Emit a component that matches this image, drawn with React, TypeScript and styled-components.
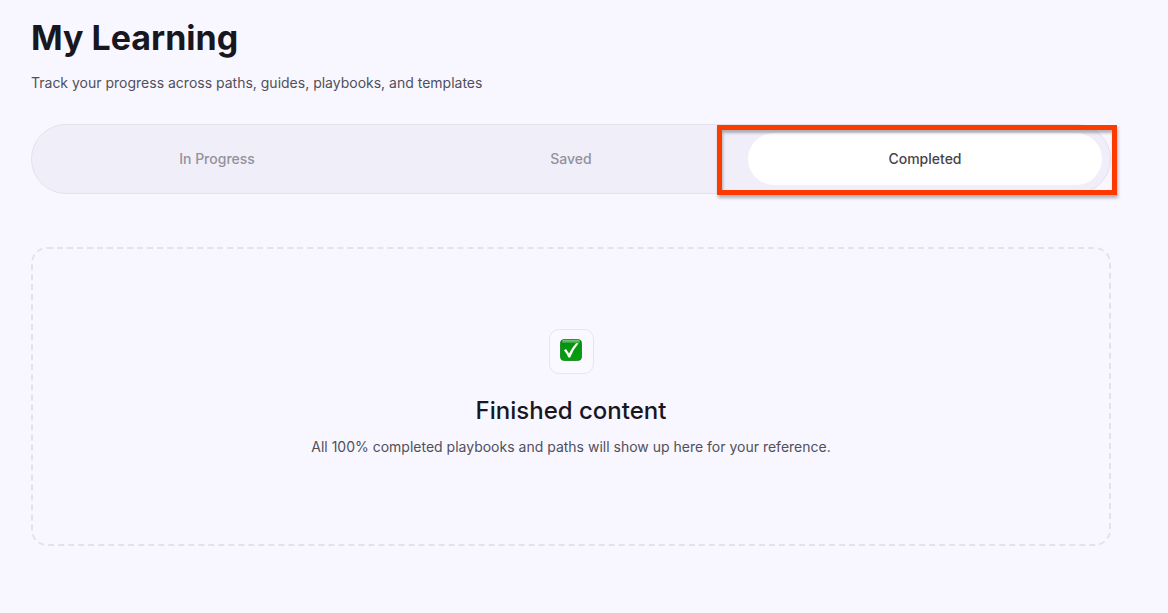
import React, { useState } from "react";
import styled, { createGlobalStyle } from "styled-components";

const GlobalStyle = createGlobalStyle`
  *, *::before, *::after { box-sizing: border-box; }
  body {
    margin: 0;
    background: #f8f7ff;
    color: #18161f;
    font-family: Inter, "Liberation Sans", sans-serif;
    font-size: 14px;
    line-height: 20px;
  }
  h1, h2, p { margin: 0; }
`;

const Page = styled.main`
  padding: 16px 57px 64px 31px;
`;

const Title = styled.h1`
  font-size: 34px;
  line-height: 44px;
  font-weight: 700;
`;

const Lead = styled.p`
  color: #514f5a;
`;

const Intro = styled(Lead)`
  margin-top: 13px;
`;

const TabBar = styled.div`
  display: flex;
  margin-top: 31px;
  padding: 8px;
  border: 1px solid #e3e1eb;
  border-radius: 35px;
  background: #f0eef8;
`;

const TabSlot = styled.div`
  position: relative;
  flex: 1;
  display: flex;
`;

const Tab = styled.button<{ $active: boolean }>`
  flex: 1;
  height: 52px;
  padding: 0;
  border: 0;
  border-radius: 26px;
  background: ${(p) => (p.$active ? "#ffffff" : "transparent")};
  color: ${(p) => (p.$active ? "#45434c" : "#93919c")};
  font: inherit;
  font-weight: 500;
  cursor: pointer;
`;

const Highlight = styled.span`
  position: absolute;
  inset: -8px -15px -10px -31px;
  border: 5px solid #ff3a00;
  box-shadow: 1px 3px 3px rgba(0, 0, 0, 0.28), inset 1px 3px 3px rgba(0, 0, 0, 0.28);
  pointer-events: none;
`;

const EmptyState = styled.section`
  display: flex;
  flex-direction: column;
  align-items: center;
  margin-top: 53px;
  padding: 80px 24px;
  border: 2px dashed #e3e1ee;
  border-radius: 16px;
  text-align: center;
`;

const IconTile = styled.div`
  display: grid;
  place-items: center;
  width: 45px;
  height: 45px;
  padding-bottom: 3px;
  border: 1px solid #e6e4ef;
  border-radius: 10px;
  background: #faf9ff;
`;

const EmptyTitle = styled.h2`
  margin: 21px 0 10px;
  font-size: 24px;
  line-height: 32px;
  font-weight: 500;
`;

const EmptyText = styled(Lead)`
  margin-bottom: 7px;
`;

const CheckIcon = () => (
  <svg width="22" height="22" viewBox="0 0 22 22" aria-hidden="true">
    <defs>
      <linearGradient id="face" x1="0" y1="0" x2="0" y2="1">
        <stop offset="0" stopColor="#078f12" />
        <stop offset="1" stopColor="#04a00b" />
      </linearGradient>
      <linearGradient id="shine" x1="0" y1="0" x2="0" y2="1">
        <stop offset="0" stopColor="#7ccb80" />
        <stop offset="1" stopColor="#2fa238" />
      </linearGradient>
    </defs>
    <rect x="0.4" y="0.4" width="21.2" height="21.2" rx="4" fill="url(#face)" stroke="#087b12" strokeWidth="0.8" />
    <rect x="2" y="1" width="18" height="3" rx="1.5" fill="url(#shine)" />
    <path d="M4 11.2 L6 10 L9 14.6 Q12 8.6 16 4.2 L18.6 4.2 Q13.2 10.4 10.2 18.4 L8.4 18.4 Q6.6 14.4 4 11.2 Z" fill="#fff" />
  </svg>
);

const tabs = ["In Progress", "Saved", "Completed"];

export default function App() {
  const [active, setActive] = useState("Completed");
  return (
    <>
      <GlobalStyle />
      <Page>
        <Title>My Learning</Title>
        <Intro>Track your progress across paths, guides, playbooks, and templates</Intro>
        <TabBar role="tablist" aria-label="Learning status">
          {tabs.map((name) => (
            <TabSlot key={name} role="presentation">
              <Tab
                type="button"
                role="tab"
                aria-selected={name === active}
                $active={name === active}
                onClick={() => setActive(name)}
              >
                {name}
              </Tab>
              {name === active && <Highlight />}
            </TabSlot>
          ))}
        </TabBar>
        <EmptyState>
          <IconTile>
            <CheckIcon />
          </IconTile>
          <EmptyTitle>Finished content</EmptyTitle>
          <EmptyText>All 100% completed playbooks and paths will show up here for your reference.</EmptyText>
        </EmptyState>
      </Page>
    </>
  );
}
